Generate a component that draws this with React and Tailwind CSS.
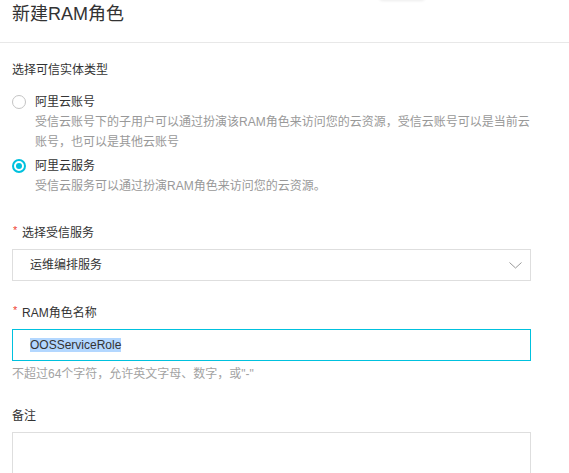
import React, { useState } from "react";

const Radio = ({ checked }) => (
    <span
        className={
            checked
                ? "w-[14px] h-[14px] rounded-full border-2 border-[#00c1de] bg-white flex items-center justify-center shrink-0"
                : "w-[14px] h-[14px] rounded-full border border-[#c4c4c4] bg-white shrink-0"
        }
    >
        {checked && <span className="w-[6px] h-[6px] rounded-full bg-[#00c1de]" />}
    </span>
);

const Required = ({ children }) => (
    <div className="flex items-start leading-[20px] text-[12px] text-[#333]">
        <span className="text-[#f04134] text-[11px] leading-[14px] w-[10px] pl-[1px]">*</span>
        <span>{children}</span>
    </div>
);

const App = () => {
    const [type, setType] = useState("service");

    const options = [
        {
            key: "account",
            label: "阿里云账号",
            desc: "受信云账号下的子用户可以通过扮演该RAM角色来访问您的云资源，受信云账号可以是当前云账号，也可以是其他云账号",
        },
        {
            key: "service",
            label: "阿里云服务",
            desc: "受信云服务可以通过扮演RAM角色来访问您的云资源。",
        },
    ];

    return (
        <div className="w-[569px] h-[473px] overflow-hidden bg-white relative font-['Liberation_Sans','Noto_Sans_CJK_SC',sans-serif]">
            {/* popover shadow peeking in from above */}
            <div className="absolute top-[-10px] left-[379px] w-[46px] h-[10px] bg-white rounded-sm shadow-[0_1px_3px_rgba(0,0,0,0.08)]" />

            {/* Header */}
            <div className="h-[43px] border-b border-[#e8e8e8] px-3 pt-[2px]">
                <h1 className="text-[18px] leading-[25px] text-[#333]">新建RAM角色</h1>
            </div>

            {/* Form */}
            <div className="w-[531px] pl-3 pt-[17px]">
                <div className="text-[12px] leading-[20px] text-[#333]">选择可信实体类型</div>

                <div className="mt-[12px] flex flex-col gap-[4px]">
                    {options.map((o) => (
                        <div key={o.key} className="flex cursor-pointer" onClick={() => setType(o.key)}>
                            <div className="w-[23px] h-[20px] flex items-center">
                                <Radio checked={type === o.key} />
                            </div>
                            <div className="flex-1">
                                <div className="text-[12px] leading-[20px] text-[#333]">{o.label}</div>
                                <div className="text-[12px] leading-[20px] text-[#999]">{o.desc}</div>
                            </div>
                        </div>
                    ))}
                </div>

                <div className="mt-[27px]">
                    <Required>选择受信服务</Required>
                    <div className="mt-[6px] h-[32px] border border-[#dedede] flex items-center justify-between pl-[17px] pr-[8px]">
                        <span className="text-[12px] text-[#333]">运维编排服务</span>
                        <svg width="13" height="7" viewBox="0 0 13 7" fill="none">
                            <path d="M0.5 0.5L6.5 6L12.5 0.5" stroke="#999" strokeWidth="1" />
                        </svg>
                    </div>
                </div>

                <div className="mt-[22px]">
                    <Required>RAM角色名称</Required>
                    <div className="mt-[6px] h-[32px] border border-[#00c1de] flex items-center pl-[17px]">
                        <span className="text-[12px] leading-[14px] text-[#333] bg-[#b3d7ff]">OOSServiceRole</span>
                    </div>
                    <div className="mt-[3px] text-[12px] leading-[20px] text-[#a3a3a3]">
                        不超过64个字符，允许英文字母、数字，或"-"
                    </div>
                </div>

                <div className="mt-[22px]">
                    <div className="text-[12px] leading-[20px] text-[#333]">备注</div>
                    <div className="mt-[6px] h-[80px] border border-[#dedede]" />
                </div>
            </div>
        </div>
    );
};

export default App;
